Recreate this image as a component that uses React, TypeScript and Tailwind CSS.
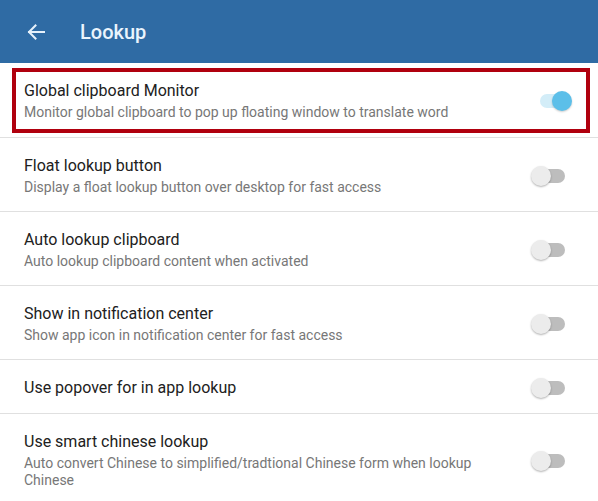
import React from "react";

function Toggle({ on }: { on: boolean }) {
  if (on) {
    return (
      <div className="relative w-[34px] h-[20px] shrink-0">
        <div className="absolute left-[2px] right-[6px] top-[3px] h-[14px] rounded-full bg-[#d3edf8]" />
        <div className="absolute right-0 top-0 w-[20px] h-[20px] rounded-full bg-[#5cbfe9] shadow-[0_1px_2px_rgba(0,0,0,0.2)]" />
      </div>
    );
  }
  return (
    <div className="relative w-[34px] h-[20px] shrink-0">
      <div className="absolute left-[4px] right-0 top-[3px] h-[14px] rounded-full bg-[#bdbdbd]" />
      <div className="absolute left-0 top-0 w-[20px] h-[20px] rounded-full bg-[#ececec] shadow-[0_1px_2px_rgba(0,0,0,0.3)]" />
    </div>
  );
}

const rows: { title: string; sub?: string }[] = [
  { title: "Float lookup button", sub: "Display a float lookup button over desktop for fast access" },
  { title: "Auto lookup clipboard", sub: "Auto lookup clipboard content when activated" },
  { title: "Show in notification center", sub: "Show app icon in notification center for fast access" },
  { title: "Use popover for in app lookup" },
  {
    title: "Use smart chinese lookup",
    sub: "Auto convert Chinese to simplified/tradtional Chinese form when lookup Chinese",
  },
];

export default function App() {
  return (
    <div
      className="w-[598px] h-[501px] bg-white overflow-hidden"
      style={{ fontFamily: "Roboto, 'Noto Sans', sans-serif" }}
    >
      <div className="h-[63px] bg-[#2f6ba4] flex items-center">
        <svg className="ml-[27px]" width="18" height="16" viewBox="0 0 18 16" fill="none">
          <path d="M17 8H2M8.5 1.5L2 8l6.5 6.5" stroke="#e6f1fb" strokeWidth="2" strokeLinecap="square" />
        </svg>
        <span className="ml-[35px] text-[20px] font-medium text-[#eaf4fd] leading-none">Lookup</span>
      </div>

      <div className="pl-[12px] pr-[8px] pt-[5px] pb-[4px] border-b border-[#e0e0e0]">
        <div className="border-[4px] border-[#b0000e] pl-[8px] pr-[14px] pt-[9px] pb-[8px] flex items-center justify-between">
          <div>
            <div className="text-[16px] leading-[20px] text-[#212121]">Global clipboard Monitor</div>
            <div className="text-[14px] leading-[17px] mt-[3px] text-[#777777]">
              Monitor global clipboard to pop up floating window to translate word
            </div>
          </div>
          <Toggle on />
        </div>
      </div>

      {rows.map((r, i) => (
        <div
          key={i}
          className={`pl-[24px] pr-[33px] pt-[18px] pb-[15px] flex items-center justify-between ${
            i < rows.length - 1 ? "border-b border-[#e0e0e0]" : ""
          }`}
        >
          <div className="w-[480px]">
            <div className="text-[16px] leading-[20px] text-[#212121]">{r.title}</div>
            {r.sub && (
              <div className="text-[14px] leading-[17px] mt-[3px] text-[#777777]">{r.sub}</div>
            )}
          </div>
          <Toggle on={false} />
        </div>
      ))}
    </div>
  );
}
